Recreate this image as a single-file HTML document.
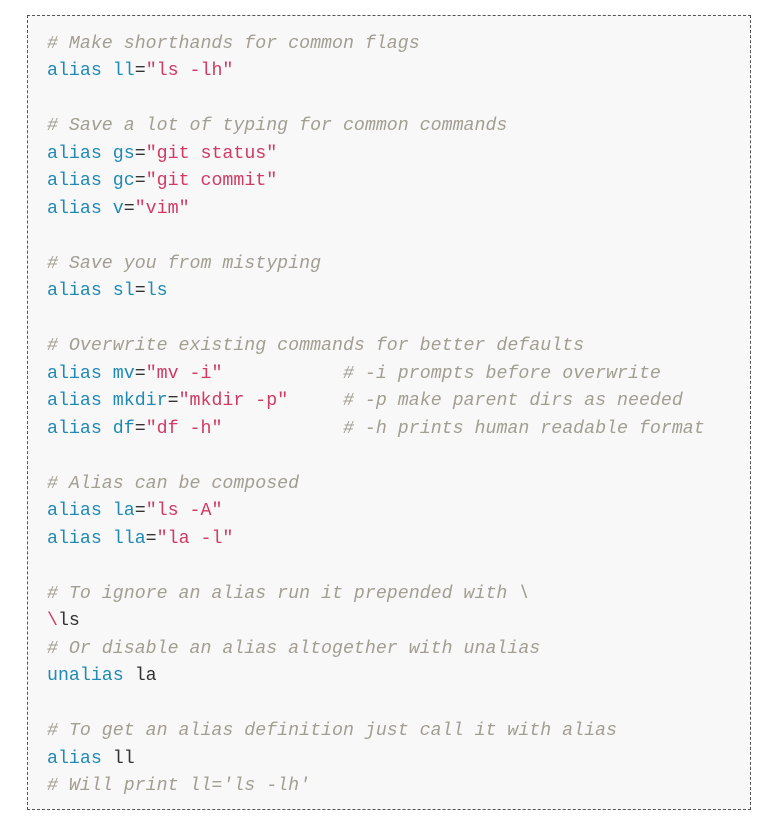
<!DOCTYPE html>
<html><head><style>
html,body{margin:0;padding:0;background:#fff;width:760px;height:831px;overflow:hidden}
.box{position:absolute;left:27px;top:15px;width:724px;height:795px;border:1px dashed #555;background:#f8f8f8;box-sizing:border-box}
pre{position:absolute;left:19px;top:15px;margin:0;font-family:"Liberation Mono",monospace;font-size:18.28px;line-height:27.48px;color:#333;white-space:pre}
.c{color:#a39e92;font-style:italic}
.k{color:#1f8ab3}
.s{color:#d03a63}
</style></head><body>
<div class="box"><pre><span class="c"># Make shorthands for common flags</span>
<span class="k">alias</span> <span class="k">ll</span>=<span class="s">"ls -lh"</span>

<span class="c"># Save a lot of typing for common commands</span>
<span class="k">alias</span> <span class="k">gs</span>=<span class="s">"git status"</span>
<span class="k">alias</span> <span class="k">gc</span>=<span class="s">"git commit"</span>
<span class="k">alias</span> <span class="k">v</span>=<span class="s">"vim"</span>

<span class="c"># Save you from mistyping</span>
<span class="k">alias</span> <span class="k">sl</span>=<span class="k">ls</span>

<span class="c"># Overwrite existing commands for better defaults</span>
<span class="k">alias</span> <span class="k">mv</span>=<span class="s">"mv -i"</span>           <span class="c"># -i prompts before overwrite</span>
<span class="k">alias</span> <span class="k">mkdir</span>=<span class="s">"mkdir -p"</span>     <span class="c"># -p make parent dirs as needed</span>
<span class="k">alias</span> <span class="k">df</span>=<span class="s">"df -h"</span>           <span class="c"># -h prints human readable format</span>

<span class="c"># Alias can be composed</span>
<span class="k">alias</span> <span class="k">la</span>=<span class="s">"ls -A"</span>
<span class="k">alias</span> <span class="k">lla</span>=<span class="s">"la -l"</span>

<span class="c"># To ignore an alias run it prepended with \</span>
<span class="s">\</span>ls
<span class="c"># Or disable an alias altogether with unalias</span>
<span class="k">unalias</span> la

<span class="c"># To get an alias definition just call it with alias</span>
<span class="k">alias</span> ll
<span class="c"># Will print ll='ls -lh'</span></pre></div>
</body></html>
